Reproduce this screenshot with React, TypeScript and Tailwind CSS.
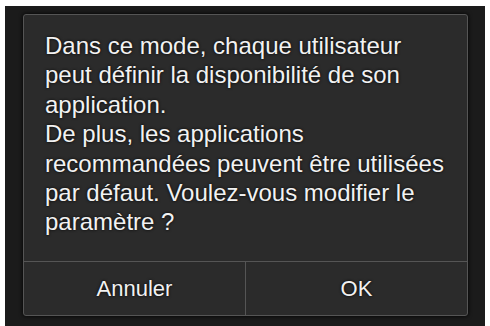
import React from "react";

const lines = [
  "Dans ce mode, chaque utilisateur",
  "peut définir la disponibilité de son",
  "application.",
  "De plus, les applications",
  "recommandées peuvent être utilisées",
  "par défaut. Voulez-vous modifier le",
  "paramètre ?",
];

const App = () => {
  return (
    <div className="w-[490px] h-[326px] bg-white pt-[6px] px-[5px] font-['Liberation_Sans',Arial,sans-serif]">
      <div className="h-[320px] bg-[#1b1b1b] pt-[8px] pl-[18px] pr-[17px] pb-[10px]">
        <div className="h-full flex flex-col bg-[#2b2b2b] border border-[#555] rounded-[3px] shadow-[0_0_4px_#000]">
          <div className="flex-1 pl-[21px] pt-[16px] text-[24px] leading-[29.4px] text-[#f2f2f2] [text-shadow:0_0_3px_#000]">
            {lines.map((l) => (
              <div key={l} className="whitespace-nowrap">{l}</div>
            ))}
          </div>
          <div className="flex h-[54px] border-t border-[#555] text-[22px] text-[#f2f2f2] [text-shadow:0_0_3px_#000]">
            <div className="flex-1 flex items-center justify-center">Annuler</div>
            <div className="flex-1 flex items-center justify-center border-l border-[#555]">OK</div>
          </div>
        </div>
      </div>
    </div>
  );
};

export default App;
